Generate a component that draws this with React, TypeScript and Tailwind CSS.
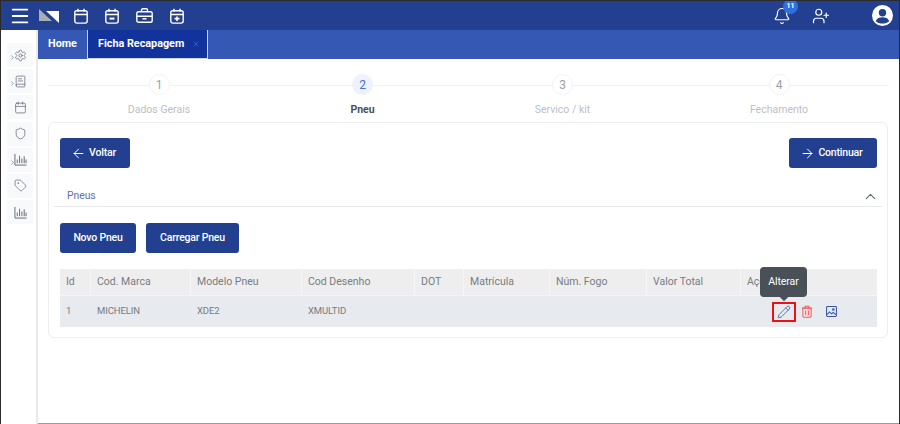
import React from 'react';
import { Menu, Calendar, Bell, UserPlus, Settings, BookText, Shield, Tag, ArrowLeft, ArrowRight, ChevronUp, ChevronRight, X, Pencil } from 'lucide-react';

const steps = [
  { n: '1', label: 'Dados Gerais', width: 'w-[222px]' },
  { n: '2', label: 'Pneu', width: 'w-[185px]', active: true },
  { n: '3', label: 'Servico / kit', width: 'w-[215px]' },
  { n: '4', label: 'Fechamento', width: 'w-[218px]' },
];

const columns = [
  { label: 'Id', width: 'w-[31px]' },
  { label: 'Cod. Marca', width: 'w-[100px]' },
  { label: 'Modelo Pneu', width: 'w-[111px]' },
  { label: 'Cod Desenho', width: 'w-[113px]' },
  { label: 'DOT', width: 'w-[49px]' },
  { label: 'Matrícula', width: 'w-[86px]' },
  { label: 'Núm. Fogo', width: 'w-[97px]' },
  { label: 'Valor Total', width: 'w-[94px]' },
  { label: 'Ações', width: 'w-[136px]' },
];

const cells = ['1', 'MICHELIN', 'XDE2', 'XMULTID', '', '', '', ''];

function BarsIcon({ size = 13 }: { size?: number }) {
  return (
    <svg width={size} height={size} viewBox="0 0 14 14" fill="none" stroke="currentColor" strokeWidth="1">
      <path d="M1 1v12h12.5" />
      <path d="M3.5 11V7M6 11V3M8.5 11V6M11 11V3.5M13 11V7" />
    </svg>
  );
}

const sideItems = [
  { icon: Settings, arrow: true },
  { icon: BookText, arrow: true },
  { icon: Calendar },
  { icon: Shield },
  { icon: BarsIcon, arrow: true },
  { icon: Tag },
  { icon: BarsIcon },
];

function Logo() {
  return (
    <svg width="20" height="14" viewBox="0 0 20 14" className="ml-[8px]">
      <polygon points="0,0 13,12 0,12" fill="#a9adb5" />
      <polygon points="7,2 20,2 20,14" fill="#ffffff" />
    </svg>
  );
}

function CalendarGlyph({ mark }: { mark?: 'minus' | 'plus' }) {
  return (
    <svg width="14" height="16" viewBox="0 0 14 16" fill="none" stroke="currentColor" strokeWidth="1.4">
      <rect x="0.8" y="2.7" width="12.4" height="12.4" rx="2" />
      <path d="M1 6.5h12M4 0.8v3M10 0.8v3" />
      {mark === 'minus' && <path d="M4.5 10.6h5" strokeWidth="2" />}
      {mark === 'plus' && <path d="M4.5 10.6h5M7 8.4v4.6" strokeWidth="1.6" />}
    </svg>
  );
}

function CaseGlyph() {
  return (
    <svg width="17" height="15" viewBox="0 0 17 15" fill="none" stroke="currentColor" strokeWidth="1.4">
      <rect x="0.8" y="3.7" width="15.4" height="10.5" rx="1.8" />
      <path d="M5.5 3.7V2a1.2 1.2 0 0 1 1.2-1.2h3.6A1.2 1.2 0 0 1 11.5 2v1.7" />
      <path d="M1 8.2h15M6.5 10.8h4" />
    </svg>
  );
}

function AvatarGlyph() {
  return (
    <svg width="21" height="21" viewBox="0 0 21 21">
      <circle cx="10.5" cy="10.5" r="10.5" fill="#ffffff" />
      <circle cx="10.5" cy="7.8" r="3.7" fill="#233f8f" />
      <path d="M3.8 16.2c1-2.900 3.700-3.900 6.700-3.900s5.700 1 6.700 3.900c-1.700 1.500-4 2.300-6.700 2.300s-5-.8-6.700-2.300z" fill="#233f8f" />
    </svg>
  );
}

function TrashGlyph() {
  return (
    <svg width="12" height="13" viewBox="0 0 13 14" fill="#fde3e4" stroke="#f25a60" strokeWidth="1.1">
      <path d="M2 3.500h9v8.300a1.500 1.500 0 0 1-1.500 1.500h-6A1.500 1.500 0 0 1 2 11.800z" />
      <path d="M0.800 3.300h11.400M4.500 3V1.200h4V3M5 6v4.800M8 6v4.800" fill="none" />
    </svg>
  );
}

function PictureGlyph() {
  return (
    <svg width="11" height="11" viewBox="0 0 12 12" fill="#e3e8f6" stroke="#3a55a5" strokeWidth="1.100">
      <rect x="0.600" y="0.600" width="10.800" height="10.800" rx="1" />
      <path d="M1 9.500l2.800-3 2.200 2 1.800-1.500 3 2.500" fill="none" />
      <circle cx="8" cy="3.800" r="0.900" fill="none" />
    </svg>
  );
}

export default function App() {
  return (
    <div className="w-[900px] h-[424px] overflow-hidden flex flex-col bg-white border-x border-t border-[#2b2b2b] font-['Roboto',sans-serif]">
      <header className="h-[29px] shrink-0 bg-[#233f8f] flex items-center text-white">
        <Menu size={22} strokeWidth={2} className="ml-[8px]" />
        <Logo />
        <div className="flex items-center gap-[17px] ml-[15px]">
          <CalendarGlyph />
          <CalendarGlyph mark="minus" />
          <CaseGlyph />
          <CalendarGlyph mark="plus" />
        </div>
        <div className="ml-auto flex items-center">
          <div className="relative">
            <Bell size={18} strokeWidth={1.6} />
            <span className="absolute -top-[8px] left-[10px] w-[15px] h-[15px] rounded-full bg-[#2f6fe0] text-[7px] font-bold flex items-center justify-center">11</span>
          </div>
          <UserPlus size={18} strokeWidth={1.6} className="ml-[21px]" />
          <div className="ml-[42px] mr-[6px] w-[21px] h-[21px]">
            <AvatarGlyph />
          </div>
        </div>
      </header>

      <div className="flex flex-1 min-h-0">
        <aside className="w-[37px] shrink-0 pt-[13px] flex flex-col gap-[2.2px] pl-[6px] border-r-[2px] border-[#e9e9e9]">
          {sideItems.map((item, i) => {
            const Icon = item.icon;
            return (
              <div key={i} className="relative w-[26px] h-[24px] bg-[#f8f9fa] rounded-[2px] flex items-center justify-center text-[#5c6470]">
                {item.arrow && <ChevronRight size={7} strokeWidth={2} className="absolute left-[2px] top-[11px] text-[#4f628f]" />}
                <Icon size={13} strokeWidth={1.3} />
              </div>
            );
          })}
        </aside>

        <main className="flex-1 min-w-0 border-b border-[#9a9a9a]">
          <nav className="h-[29px] bg-[#3558b4] flex items-stretch text-white text-[10.8px] font-bold">
            <div className="w-[49px] flex items-center justify-center">Home</div>
            <div className="w-[121px] bg-[#12339b] border-x border-b border-[#cdd6f0] flex items-center pl-[10px] gap-[8px]">
              Ficha Recapagem
              <X size={8} className="text-[#4a68bd]" />
            </div>
          </nav>

          <div className="pl-[10px] pr-[10px]">
            <div className="relative flex pt-[15px]">
              <div className="absolute left-0 right-0 top-[26px] h-px bg-[#f0f1f3]" />
              {steps.map((s) => (
                <div key={s.n} className={`${s.width} relative flex flex-col items-center`}>
                  <div className={`w-[21px] h-[21px] rounded-full flex items-center justify-center text-[12px] ${s.active ? 'bg-[#edf2fd] text-[#4a6fdc]' : 'bg-white border border-[#f1f2f4] text-[#9a9fa6]'}`}>
                    {s.n}
                  </div>
                  <span className={`mt-[8px] text-[10.500px] leading-[14px] ${s.active ? 'font-bold text-[#4b5157]' : 'text-[#bcc0c5]'}`}>
                    {s.label}
                  </span>
                </div>
              ))}
            </div>

            <section className="mt-[5px] h-[216px] w-[840px] rounded-[6px] border border-[#eeeeee] px-[5px] pt-[15px]">
              <div className="flex justify-between pl-[6px] pr-[5px]">
                <button className="w-[70px] h-[30px] rounded-[3px] bg-[#233f8f] text-white text-[10.500px] tracking-[-0.2px] font-medium flex items-center justify-center gap-[3px] pr-[3px]">
                  <ArrowLeft size={15} strokeWidth={1.6} />
                  Voltar
                </button>
                <button className="w-[88px] h-[30px] rounded-[3px] bg-[#233f8f] text-white text-[10.500px] tracking-[-0.2px] font-medium flex items-center justify-center gap-[3px] pr-[3px]">
                  <ArrowRight size={15} strokeWidth={1.6} />
                  Continuar
                </button>
              </div>

              <div className="mt-[15px] h-[24px] border-b border-[#e9eaec] flex items-center justify-between pl-[13px] pr-[3px] pt-[3px]">
                <span className="text-[10.300px] text-[#5f70b3]">Pneus</span>
                <ChevronUp size={17} strokeWidth={1.5} className="text-[#5c6470]" />
              </div>

              <div className="flex gap-[10px] mt-[16px] px-[6px]">
                <button className="w-[76px] h-[30px] rounded-[3px] bg-[#233f8f] text-white text-[10.500px] tracking-[-0.2px] font-medium">Novo Pneu</button>
                <button className="w-[93px] h-[30px] rounded-[3px] bg-[#233f8f] text-white text-[10.500px] tracking-[-0.2px] font-medium">Carregar Pneu</button>
              </div>

              <div className="mt-[16px] mx-[6px] w-[817px] text-[10.500px] text-[#777c82]">
                <div className="flex h-[26px] bg-[#eeeeee]">
                  {columns.map((c) => (
                    <div key={c.label} className={`${c.width} px-[6px] flex items-center border-r border-[#f6f6f6] last:border-r-0`}>
                      {c.label}
                    </div>
                  ))}
                </div>
                <div className="flex h-[32px] bg-[#e7eaee] border-t border-[#f4f5f6] text-[9.500px] tracking-[-0.1px]">
                  {cells.map((c, i) => (
                    <div key={i} className={`${columns[i].width} px-[6px] flex items-center`}>{c}</div>
                  ))}
                  <div className="relative w-[136px] flex items-center">
                    <div className="absolute left-[19px] top-[-29px] w-[47px] h-[30px] rounded-[4px] bg-[#495057] text-white text-[10.500px] flex items-center justify-center">
                      Alterar
                      <span className="absolute left-[21px] -bottom-[3px] w-[6px] h-[6px] rotate-45 bg-[#495057]" />
                    </div>
                    <div className="ml-[31px] w-[24px] h-[20px] border-2 border-[#ee1111] flex items-center justify-center">
                      <Pencil size={14} strokeWidth={1.4} className="text-[#3a5cb0]" />
                    </div>
                    <span className="ml-[5px]"><TrashGlyph /></span>
                    <span className="ml-[13px]"><PictureGlyph /></span>
                  </div>
                </div>
              </div>
            </section>
          </div>
        </main>
      </div>
    </div>
  );
}
